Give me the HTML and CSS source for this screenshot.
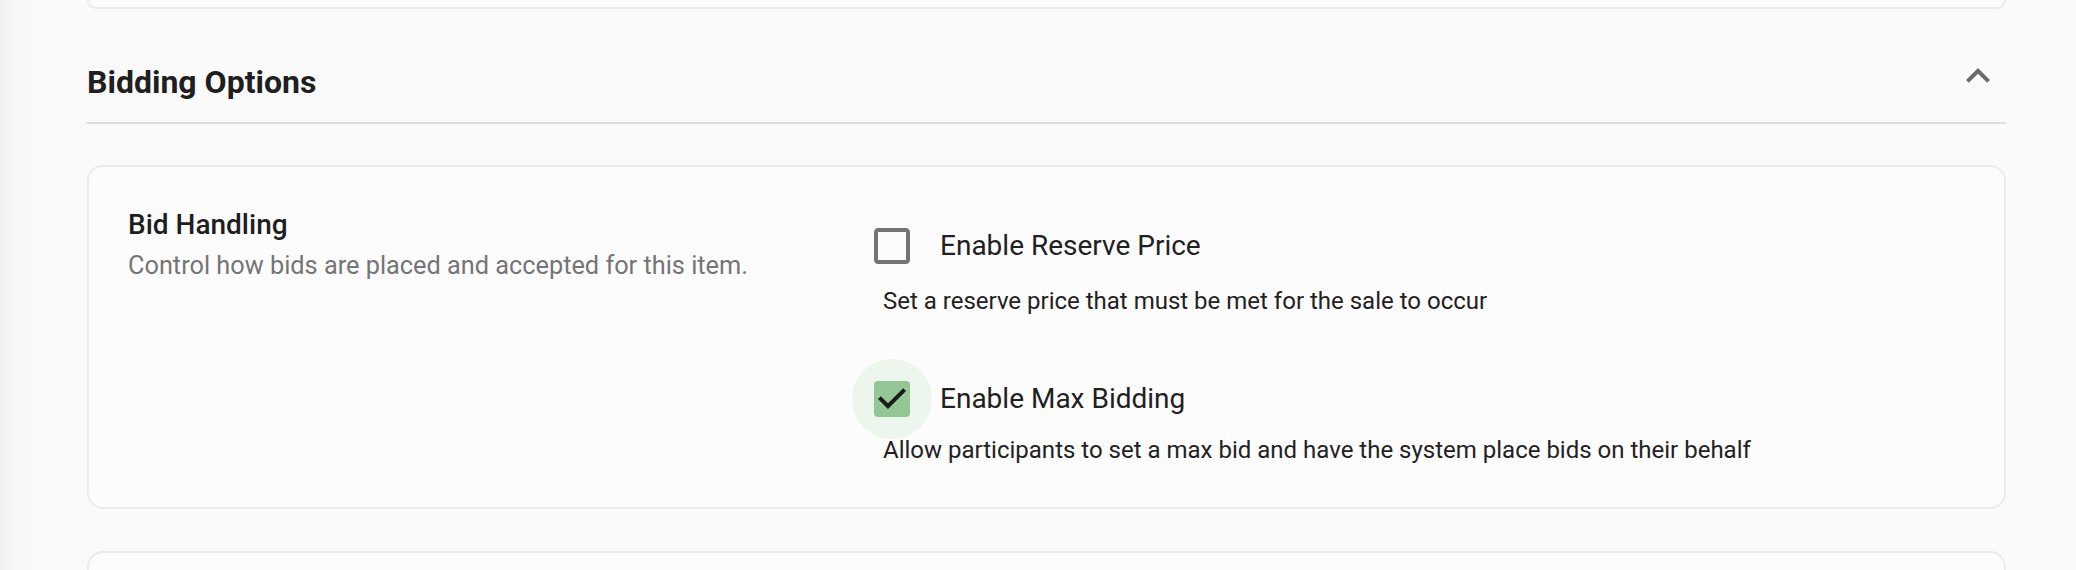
FILE: index.html
```html
<!DOCTYPE html>
<html lang="en">
<head>
<meta charset="utf-8">
<title>Bidding Options</title>
<link rel="stylesheet" href="styles.css">
</head>
<body>
<div class="page">
  <div class="card card-prev"></div>

  <div class="section-header">
    <h2 class="section-title">Bidding Options</h2>
    <span class="icon-button" aria-label="collapse">
      <svg class="chevron" viewBox="0 0 24 24" width="48" height="48"><path d="M12 8l-6 6 1.41 1.41L12 10.83l4.59 4.58L18 14z"/></svg>
    </span>
  </div>

  <div class="card card-main">
    <div class="info">
      <div class="info-title">Bid Handling</div>
      <div class="info-desc">Control how bids are placed and accepted for this item.</div>
    </div>
    <div class="options">
      <div class="option option-first">
        <label class="option-row">
          <span class="check-btn">
            <svg class="check-icon unchecked" viewBox="0 0 24 24" width="48" height="48"><path d="M19 5v14H5V5h14m0-2H5c-1.1 0-2 .9-2 2v14c0 1.1.9 2 2 2h14c1.1 0 2-.9 2-2V5c0-1.1-.9-2-2-2z"/></svg>
          </span>
          <span class="option-label">Enable Reserve Price</span>
        </label>
        <div class="option-desc">Set a reserve price that must be met for the sale to occur</div>
      </div>
      <div class="option option-second">
        <label class="option-row">
          <span class="check-btn focused">
            <svg class="check-icon checked" viewBox="0 0 24 24" width="48" height="48">
              <rect x="3" y="3" width="18" height="18" rx="2" ry="2" class="box-fill"/>
              <path class="tick" d="M10 17l-5-5 1.41-1.41L10 14.17l7.59-7.59L19 8l-9 9z"/>
            </svg>
          </span>
          <span class="option-label">Enable Max Bidding</span>
        </label>
        <div class="option-desc">Allow participants to set a max bid and have the system place bids on their behalf</div>
      </div>
    </div>
  </div>

  <div class="card card-next"></div>
</div>
</body>
</html>
```

FILE: styles.css
```css
html, body {
  margin: 0;
  padding: 0;
}

body {
  background: linear-gradient(to right, #f1f1f1 0, #f7f7f7 18px, #fafafa 40px);
  font-family: Roboto, "Noto Sans", "Liberation Sans", sans-serif;
  color: #212121;
  height: 570px;
  overflow: hidden;
}

.page {
  margin-left: 87px;
  width: 1919px;
}

.card {
  background: #fcfcfc;
  border: 2px solid #ebebeb;
  border-radius: 16px;
  box-sizing: border-box;
}

.card-prev {
  height: 9px;
  border-top: none;
  border-radius: 0 0 16px 16px;
}

.section-header {
  margin-top: 43px;
  display: flex;
  justify-content: space-between;
  align-items: flex-start;
  padding-bottom: 20px;
  border-bottom: 2px solid #dedede;
}

.section-title {
  margin: 10px 0 0 0;
  font-size: 32px;
  line-height: 40px;
  font-weight: 700;
  color: #1f1f1f;
}

.icon-button {
  display: block;
  width: 48px;
  height: 48px;
  margin-right: 4px;
}

.chevron {
  display: block;
  fill: #6b6b6b;
}

.card-main {
  margin-top: 41px;
  display: grid;
  grid-template-columns: 724px 1fr;
  padding: 39px 39px 43px 39px;
}

.info-title {
  margin-top: 1px;
  font-size: 28px;
  line-height: 36px;
  font-weight: 500;
  color: #1e1e1e;
}

.info-desc {
  margin-top: 7px;
  font-size: 25.3px;
  line-height: 32px;
  color: #757575;
}

.options {
  display: flex;
  flex-direction: column;
}

.option-second {
  margin-top: 44px;
}

.option-row {
  display: flex;
  align-items: center;
  gap: 8px;
}

.check-btn {
  width: 80px;
  height: 80px;
  border-radius: 50%;
  display: flex;
  align-items: center;
  justify-content: center;
}

.check-btn.focused {
  background: #edf6ed;
}

.check-icon {
  display: block;
}

.unchecked {
  fill: #757575;
}

.box-fill {
  fill: #94c796;
}

.tick {
  fill: #1b1b1b;
}

.option-label {
  font-size: 28px;
  line-height: 36px;
  color: #212121;
}

.option-desc {
  margin-left: 31px;
  font-size: 24px;
  line-height: 28px;
  color: #222222;
}

.option-first .option-desc {
  margin-top: 1px;
}

.option-second .option-desc {
  margin-top: -3px;
}

.card-next {
  margin-top: 42px;
  height: 60px;
}
```
